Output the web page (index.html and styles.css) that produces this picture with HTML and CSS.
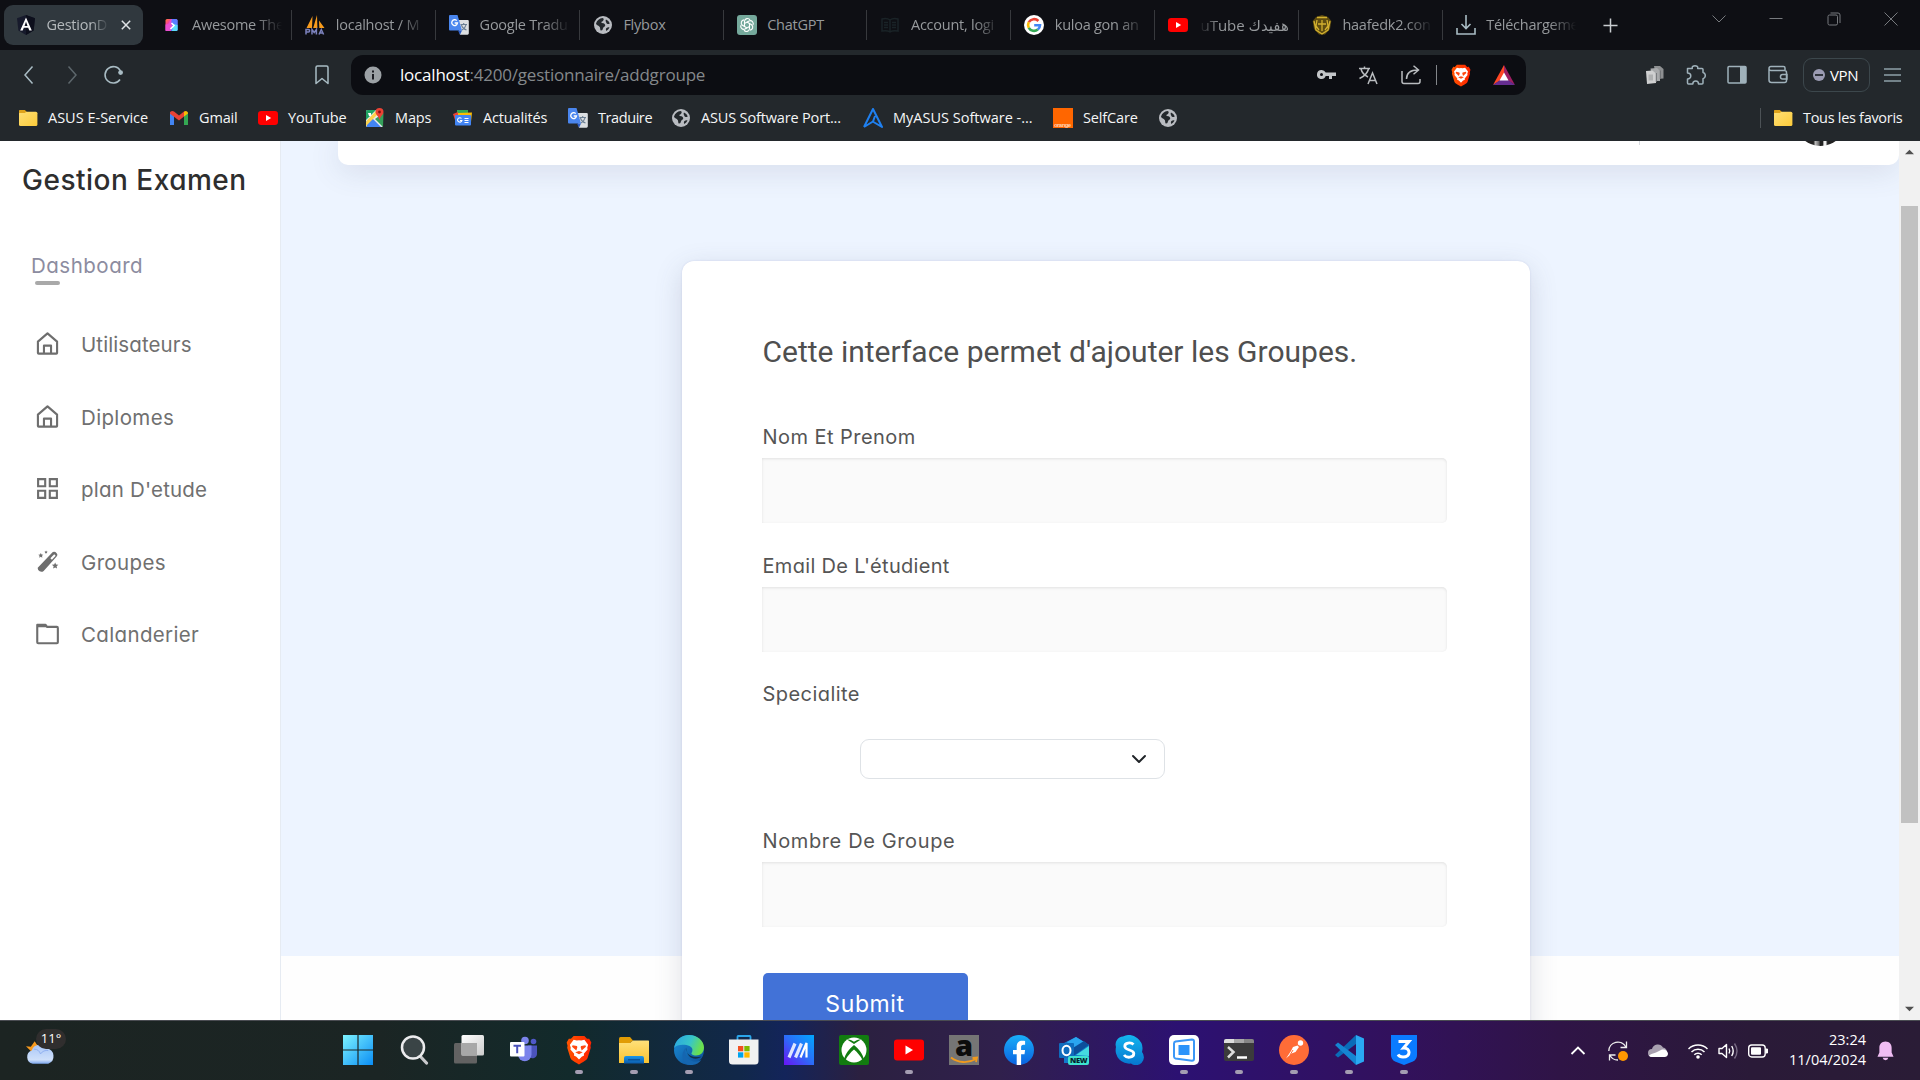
FILE: index.html
```html
<!DOCTYPE html>
<html lang="fr">
<head>
<meta charset="utf-8">
<title>GestionDiplome</title>
<link rel="stylesheet" href="styles.css">
</head>
<body>
<svg class="defs" width="0" height="0" aria-hidden="true">
  <defs>
    <linearGradient id="g-win" x1="0" y1="0" x2="1" y2="1"><stop offset="0" stop-color="#7df3ff"/><stop offset="1" stop-color="#0a8df5"/></linearGradient>
    <linearGradient id="g-fold" x1="0" y1="0" x2="0" y2="1"><stop offset="0" stop-color="#ffe07a"/><stop offset="1" stop-color="#f9c331"/></linearGradient>
    <linearGradient id="g-folds" x1="0" y1="0" x2="1" y2="1"><stop offset="0" stop-color="#ffdf75"/><stop offset="1" stop-color="#fccb3a"/></linearGradient>
    <linearGradient id="g-fblue" x1="0" y1="0" x2="0" y2="1"><stop offset="0" stop-color="#1a97ea"/><stop offset="1" stop-color="#0b5bab"/></linearGradient>
    <linearGradient id="g-tv" x1="0" y1="0" x2="1" y2="1"><stop offset="0" stop-color="#fff"/><stop offset="1" stop-color="#ccc"/></linearGradient>
    <linearGradient id="g-edge1" x1="0" y1="0" x2="1" y2=".3"><stop offset="0" stop-color="#2aa3e3"/><stop offset=".6" stop-color="#38c6c8"/><stop offset="1" stop-color="#6be04d"/></linearGradient>
    <linearGradient id="g-edge2" x1="0" y1="0" x2="1" y2="1"><stop offset="0" stop-color="#1b8fd8"/><stop offset="1" stop-color="#0c4c96"/></linearGradient>
    <linearGradient id="g-as" x1="0" y1="1" x2="1" y2="0"><stop offset="0" stop-color="#6a12f5"/><stop offset=".5" stop-color="#2c6cf8"/><stop offset="1" stop-color="#00a8ff"/></linearGradient>
    <linearGradient id="g-fb" x1="0" y1="0" x2="0" y2="1"><stop offset="0" stop-color="#19aef8"/><stop offset="1" stop-color="#0a62e0"/></linearGradient>
    <linearGradient id="g-sk" x1="0" y1="0" x2="0" y2="1"><stop offset="0" stop-color="#14b5ee"/><stop offset="1" stop-color="#0676cf"/></linearGradient>
    <linearGradient id="g-br" x1="0" y1="0" x2="1" y2="0"><stop offset="0" stop-color="#ff5500"/><stop offset="1" stop-color="#ff2200"/></linearGradient>
    <linearGradient id="g-cl" x1="0" y1="0" x2="0" y2="1"><stop offset="0" stop-color="#a9c6f7"/><stop offset=".8" stop-color="#cfe0fa"/><stop offset="1" stop-color="#7ea8ee"/></linearGradient>
    <linearGradient id="g-aw" x1="0" y1="0" x2="1" y2="1"><stop offset="0" stop-color="#ff7a2e"/><stop offset=".35" stop-color="#f434b8"/><stop offset=".6" stop-color="#7c6cff"/><stop offset="1" stop-color="#27d8f5"/></linearGradient>
    <symbol id="i-folder" viewBox="0 0 20 20"><path d="M1 3.500C1 2.500 1.600 2 2.500 2h4.300l2 2H18v3H1z" fill="#d8980c"/><rect x="1" y="3.800" width="18.400" height="14.200" rx="1.500" fill="url(#g-folds)"/><path d="M1 5V3.400C1 2.500 1.600 2 2.500 2h4l1.700 1.800L7 5z" fill="#dfa31b"/></symbol>
    <symbol id="i-yt" viewBox="0 0 20 20"><rect y="3" width="20" height="14" rx="3.200" fill="#f00"/><path d="M8 7v6l5.200-3z" fill="#fff"/></symbol>
    <symbol id="i-globe" viewBox="0 0 20 20"><circle cx="10" cy="10" r="9" fill="#b9bcc1"/><path d="M3 8.500c1-3 3.500-5 6.500-5.400 1.600.4 1.500 1.600.6 2.600-.4.700-1.700.600-1.700 1.600 0 1.300 2.800.6 3.600 2.100.5 1 .1 2.100-1.100 2.600-.9.500-.9 1.800-1.500 2.900-.6.900-2.100.5-2.200-.7 0-1.400-.3-2.200-1.400-3.100C4.700 10.200 3 9.900 3 8.500zM13 4.600c1.700.7 3 2 3.700 3.800-1.200 1.200-2.800.8-3.300-.4-.5-1.200-1.200-2.400-.4-3.400zM13.500 13c1-.8 2-.9 3-.6-.7 1.600-1.800 2.700-3.200 3.500-.6-1-.5-2.200.2-2.900z" fill="#23282c"/></symbol>
    <symbol id="i-gtr" viewBox="0 0 20 20"><path d="M8 5h10.500c.8 0 1.300.5 1.300 1.300v12c0 .8-.5 1.400-1.300 1.400H11z" fill="#dcdfe2"/><path d="M11.500 9.500h6.500M14.700 8v1.500M12.500 10c.5 2 2.500 4 5 5M17 9.800c-.5 2-2 4-4 5.200" stroke="#6b7f93" stroke-width="1.100" fill="none"/><path d="M1.300 0h7.200l4.500 15.500H1.300C.5 15.500 0 15 0 14.200V1.300C0 .5.500 0 1.300 0z" fill="#4a86ee"/><path d="M11 19.700l2-4.200H9z" fill="#2b5cc5"/><path d="M7.700 5.600A2.900 2.900 0 1 0 8.500 8H5.700" stroke="#fff" stroke-width="1.300" fill="none"/></symbol>
    <symbol id="i-brave" viewBox="0 0 24 28"><path d="M7 1h10l2.500 2.600 2-.2L23.500 7l-.8 3 .3 2-3 9.500c-.5 1.500-1.500 2.200-8 6-6.500-3.800-7.500-4.500-8-6L1 12l.3-2-.8-3 2-3.600 2 .2z" fill="url(#g-br)"/><path d="M7 4.500l3 .7 2-.4 2 .4 3-.7 3.500 4.500-.8 3 .3 1.500-3.500 4 .2 1.700-2.200 1L12 22.800l-2.500-2.600-2.200-1 .2-1.700L4 13.500l.3-1.500-.8-3z" fill="#fff"/><path d="M6 9.500l4 .8.500 1-1 3.200-4-3.500zM18 9.500l-4 .8-.5 1 1 3.200 4-3.500zM8.500 16l3.500-1 3.500 1-3.500 2z" fill="#ff4810"/></symbol>
    <symbol id="i-house" viewBox="0 0 24 24"><path d="M2 21.800V10L12 1.400 22 10v11.800c0 .5-.3.800-.8.800H2.800c-.5 0-.8-.3-.8-.8zM8.300 22.400v-8.200h7.400v8.200" fill="none" stroke="#6e6e6e" stroke-width="2.200" stroke-linejoin="round"/></symbol>
  </defs>
</svg>

<div class="browser">
  <header class="tabstrip">
    <div class="tab active">
      <svg class="fav" viewBox="0 0 20 20"><path d="M10 0l9 3.300-1.400 12.200L10 20l-7.600-4.500L1 3.300z" fill="#171a2c"/><path d="M10 0l9 3.300-1.400 12.200L10 20z" fill="#0d0f1c"/><path d="M10 2.500L4.200 15.500h2.500l1.100-2.800h4.400l1.100 2.800h2.500zM10 6.800l1.500 4.100h-3z" fill="#fff" fill-rule="evenodd"/></svg>
      <span class="tab-title">GestionD</span>
      <svg class="tab-x" viewBox="0 0 10 10"><path d="M.8.8l8.400 8.400M9.200.8L.8 9.200" stroke="#dfe3e6" stroke-width="1.500"/></svg>
    </div>
    <div class="tab first"><svg class="fav" viewBox="0 0 20 20"><rect x="3.500" y="4" width="12" height="12" rx="1.500" fill="url(#g-aw)"/><path d="M3.500 16V9.500c3 0 4-1.500 4-3L9 4h2c-2 3 2 5-1 8-1 1-1 3-1 4z" fill="#e94fd0"/><path d="M10 4c-2 4 2 6-1 12h5q1.500 0 1.500-1.500V5.500Q15.500 4 14 4z" fill="#5b7cff"/><path d="M11.500 9l4 1v4.500q0 1.500-1.500 1.500h-4z" fill="#5cdcf8"/><path d="M9.500 8l2.500 2.500-3.500 3.500" stroke="#fff" stroke-width="1.600" fill="none"/></svg><span class="tab-title">Awesome The</span></div>
    <div class="tab"><svg class="fav" viewBox="0 0 20 20"><path d="M7.500 1L7 13H1.500zM12 0l.4 13H8.200zM14 5.500L19.500 13H14.300z" fill="#f89c1c"/><path d="M1 19.500v-5h2.500c1.500 0 1.500 2.500 0 2.500H1M7 19.500v-5l2.200 3 2.200-3v5M14 19.500l2.300-5 2.300 5M15 18h3" stroke="#7c82bd" stroke-width="1.500" fill="none"/></svg><span class="tab-title">localhost / M</span></div>
    <div class="tab"><svg class="fav"><use href="#i-gtr"/></svg><span class="tab-title">Google Tradu</span></div>
    <div class="tab"><svg class="fav"><use href="#i-globe"/></svg><span class="tab-title full">Flybox</span></div>
    <div class="tab"><svg class="fav" viewBox="0 0 20 20"><rect width="20" height="20" rx="3" fill="#75a99c"/><g fill="none" stroke="#fff" stroke-width="1.100"><path d="M7.500 11.500V6.200a3 3 0 0 1 5.500-1.300"/><path d="M7.500 11.500V6.200a3 3 0 0 1 5.500-1.300" transform="rotate(60 10 10)"/><path d="M7.500 11.500V6.200a3 3 0 0 1 5.500-1.300" transform="rotate(120 10 10)"/><path d="M7.500 11.500V6.200a3 3 0 0 1 5.500-1.300" transform="rotate(180 10 10)"/><path d="M7.500 11.500V6.200a3 3 0 0 1 5.500-1.300" transform="rotate(240 10 10)"/><path d="M7.500 11.500V6.200a3 3 0 0 1 5.500-1.300" transform="rotate(300 10 10)"/></g></svg><span class="tab-title full">ChatGPT</span></div>
    <div class="tab"><svg class="fav" viewBox="0 0 20 20"><path d="M2 4c3-.8 6-.5 8 1 2-1.500 5-1.800 8-1v12c-3-.6-6-.4-8 1-2-1.400-5-1.600-8-1zM10 5v12M4 7.500h4M4 10h4M4 12.500h4M12 7.500h4M12 10h4M12 12.500h4" stroke="#1a2327" stroke-width="1.500" fill="none"/></svg><span class="tab-title">Account, logi</span></div>
    <div class="tab"><svg class="fav" viewBox="0 0 20 20"><circle cx="10" cy="10" r="10" fill="#fff"/><g fill="none" stroke-width="2.600"><path d="M14.400 6A6 6 0 0 0 4.800 7.200" stroke="#ea4335"/><path d="M4.800 7.200a6 6 0 0 0 0 5.600" stroke="#fbbc05"/><path d="M4.800 12.800a6 6 0 0 0 9 1.800" stroke="#34a853"/><path d="M13.800 14.600A6 6 0 0 0 16 10.200h-5.800" stroke="#4285f4"/></g></svg><span class="tab-title">kuloa gon an</span></div>
    <div class="tab"><svg class="fav"><use href="#i-yt"/></svg><span class="tab-title rtl">هفيدك uTube</span></div>
    <div class="tab"><svg class="fav" viewBox="0 0 20 20"><path d="M4 2l6-2 6 2 3.300 4-1.300 8-5 5.500h-6L2 14 .7 6z" fill="#5e4c10"/><path d="M5 2.500h10M2 6l2 9 6 4 6-4 2-9M10 5v11M6 9h8M5 5l-1 6 3 4M15 5l1 6-3 4" stroke="#d2b02f" stroke-width="1.300" fill="none"/></svg><span class="tab-title">haafedk2.con</span></div>
    <div class="tab"><svg class="fav" viewBox="0 0 20 20"><path d="M10 0v13M5.500 9l4.500 4.500L14.500 9M1 13v6h18v-6" stroke="#a9bcc4" stroke-width="1.600" fill="none"/></svg><span class="tab-title">Téléchargeme</span></div>
    <svg class="newtab" viewBox="0 0 16 16"><path d="M8 .5v15M.5 8h15" stroke="#c9cdd0" stroke-width="1.600"/></svg>
    <div class="winctl">
      <svg viewBox="0 0 14 14"><path d="M.5 3.500L7 10l6.500-6.500" /></svg>
      <svg viewBox="0 0 14 14"><path d="M.5 6.500h13"/></svg>
      <svg viewBox="0 0 14 14"><rect x="1" y="3" width="9.500" height="10" rx="1.500"/><path d="M3.500 1h7.500q2 0 2 2v8"/></svg>
      <svg viewBox="0 0 14 14"><path d="M.5.5l13 13M13.500.5l-13 13"/></svg>
    </div>
  </header>

  <div class="toolbar">
    <div class="nav">
      <svg viewBox="0 0 20 20"><path d="M13.500 1.500L6 10l7.500 8.500" stroke="#a9bcc4" stroke-width="1.500" fill="none"/></svg>
      <svg viewBox="0 0 20 20"><path d="M6.500 1.500L14 10l-7.500 8.500" stroke="#5d676c" stroke-width="1.500" fill="none"/></svg>
      <svg viewBox="0 0 20 20"><path d="M16 14.500A8.200 8.200 0 1 1 16.500 6" stroke="#a9bcc4" stroke-width="1.600" fill="none"/><circle cx="16.600" cy="7.600" r="2.400" fill="#a9bcc4"/></svg>
    </div>
    <svg class="bm" viewBox="0 0 20 20"><path d="M4 2.500C4 1.500 4.500 1 5.500 1h9c1 0 1.500.5 1.500 1.500v16L10 13.500l-6 5z" stroke="#a9bcc4" stroke-width="1.500" fill="none" stroke-linejoin="round"/></svg>
    <div class="urlbar">
      <svg class="info" viewBox="0 0 18 18"><circle cx="9" cy="9" r="8.500" fill="#9ca1a5"/><path d="M9 8v5.500M9 4.500v2" stroke="#0e0f14" stroke-width="1.800"/></svg>
      <span class="url"><b>localhost</b>:4200/gestionnaire/addgroupe</span>
      <div class="urlicons">
        <svg viewBox="0 0 20 20"><path d="M5.500 5a4.500 4.500 0 1 0 4.200 6H13v3h3v-3h4V7.500H9.700A4.500 4.500 0 0 0 5.500 5zm0 3a1.500 1.500 0 1 1 0 3 1.500 1.500 0 0 1 0-3z" fill="#c3c5c8" fill-rule="evenodd"/></svg>
        <svg viewBox="0 0 20 20"><path d="M1 3.500h11M6.500 1.500v2M3 4c1 4 4 6.500 7 8M10.500 4c-1 4-4.500 7.500-9 9.500M10 19l4.500-11L19 19M11.500 15.500h6" stroke="#b9bcbf" stroke-width="1.500" fill="none"/></svg>
        <svg viewBox="0 0 20 20"><path d="M1 6v10.500q0 2 2 2h14q2 0 2-2V14M5.500 14c0-6 4-9 11.500-9M12.500.8L17.500 5l-5 4.200" stroke="#b9bcbf" stroke-width="1.500" fill="none"/></svg>
        <i class="sep"></i>
        <svg class="brv"><use href="#i-brave"/></svg>
        <svg class="tri" viewBox="0 0 22 20"><path d="M11 0L0 20l11-7z" fill="#ff4724"/><path d="M11 0l11 20-11-7z" fill="#9e1f63"/><path d="M0 20h22l-7-5H7z" fill="#662d91"/><path d="M11 7.500L6.500 15.500h9z" fill="#fff"/></svg>
      </div>
    </div>
    <div class="ext">
      <svg viewBox="0 0 20 20"><path d="M9 1h6l3.500 3v9.500l-7 .5z" fill="#8e9092"/><path d="M5.500 3.500L12 3l3 3v10H7z" fill="#a7a9ab"/><path d="M1 6l6.500-.5 3.500 3V18l-9 1z" fill="#cfd0d1"/><path d="M3.500 9.500h4.500v6h-4.500z" fill="#aeb0b1"/><path d="M11.300 8v9M15.300 5.500V14" stroke="#6d7073"/></svg>
      <svg viewBox="0 0 20 20"><path d="M1.500 3.500H6.300C5.800 1.500 7.300.8 9 .8s3.200.7 2.700 2.700H16c.6 0 1 .4 1 1v3c1.400.2 2.300 1.600 2.300 3s-1 2.900-2.300 3.200v4.200c0 .6-.4 1-1 1h-3.500c0-1.800-1.200-3-2.700-3s-3 1.200-3 3H2.500c-.6 0-1-.4-1-1v-4c1.800 0 3.300-1 3.300-2.900S3.300 8 1.500 8z" stroke="#9fb1ba" stroke-width="1.500" fill="none" stroke-linejoin="round"/></svg>
      <svg viewBox="0 0 20 20"><rect x="1" y="1.500" width="18" height="16.500" rx="1" stroke="#9fb1ba" stroke-width="1.500" fill="none"/><path d="M13 1.500h6V18h-6z" fill="#9fb1ba"/></svg>
      <svg viewBox="0 0 20 20"><path d="M17 5.500V3q0-1.500-1.500-1.500H3Q1 1.500 1 3.500V15q0 2.500 2.500 2.500h13q2 0 2-2v-8q0-2-2-2H3Q1 5.500 1 3.500M19 9.500h-4.500a2 2.200 0 0 0 0 4.500H19z" stroke="#9fb1ba" stroke-width="1.500" fill="none"/></svg>
      <div class="vpn"><i></i><span>VPN</span></div>
      <svg class="menu" viewBox="0 0 18 14"><path d="M0 1h17M0 7h17M0 13h17" stroke="#8fa0a8" stroke-width="1.300"/></svg>
    </div>
  </div>

  <nav class="bookmarks">
    <a><svg><use href="#i-folder"/></svg><span class="t1">ASUS E-Service</span></a>
    <a><svg viewBox="0 0 20 20"><path d="M1 17V4l4 3v10z" fill="#4285f4"/><path d="M15 7l4-3v13h-4z" fill="#34a853"/><path d="M1 5.500C1 3 3.500 2.500 5 3.600l5 3.900 5-3.900V8.500L10 12.400 1 5.800z" fill="#ea4335"/><path d="M15 3.600c1.800-1.300 4-.5 4 1.900L15 8.600z" fill="#fbbc04"/></svg><span>Gmail</span></a>
    <a><svg><use href="#i-yt"/></svg><span>YouTube</span></a>
    <a><svg viewBox="0 0 20 20"><rect x="1" y="2" width="17" height="17" rx="1.500" fill="#e9eaec"/><path d="M1 14l5-5 10 10H2z" fill="#4285f4"/><path d="M1 13.500L12 2l2 3L1 18z" fill="#fdd34c"/><path d="M1 3.500Q1 2 2.500 2H11L1 12z" fill="#1fa463"/><path d="M10 11l8 8 .5-14z" fill="#34a05a"/><path d="M3 5h3v3H4z" fill="#fff"/><path d="M14.500 0a4 4 0 0 1 4 4c0 3-3.500 4-4 8.500C14 8 10.500 7 10.500 4a4 4 0 0 1 4-4z" fill="#ea4335"/><circle cx="14.500" cy="4" r="1.400" fill="#811411"/></svg><span>Maps</span></a>
    <a><svg viewBox="0 0 20 20"><path d="M4 2h11v6H4z" fill="#34a853"/><path d="M0 6l5-2v8H2z" fill="#ea4335"/><path d="M5 5l14-.5L18 14H5z" fill="#fbbc04"/><rect x="2" y="7" width="16" height="10.500" rx="1" fill="#4285f4"/><path d="M8.500 10.500a2.200 2.200 0 1 0 .4 2H7M11.500 10.500h4M11.500 12.500h4M11.500 14.500h4" stroke="#fff" stroke-width="1.100" fill="none"/></svg><span>Actualités</span></a>
    <a><svg><use href="#i-gtr"/></svg><span class="t2">Traduire</span></a>
    <a><svg><use href="#i-globe"/></svg><span class="t3">ASUS Software Port...</span></a>
    <a><svg viewBox="0 0 20 20"><path d="M1 19L10 1l9 18-8.500-5M1 19l9-5.500L12 8" stroke="#1f80f0" stroke-width="2" fill="none" stroke-linejoin="round"/></svg><span class="t1">MyASUS Software -...</span></a>
    <a><svg viewBox="0 0 20 20"><path d="M0 0h20v20H0z" fill="#f60"/><text x="1" y="18.500" font-size="6" font-family="Liberation Sans, sans-serif" font-weight="bold" fill="#ffd2b3" textLength="17">orange</text></svg><span>SelfCare</span></a>
    <a><svg><use href="#i-globe"/></svg></a>
    <a class="all"><svg><use href="#i-folder"/></svg><span>Tous les favoris</span></a>
  </nav>
</div>

<main class="page">
  <aside class="sidebar">
    <h1>Gestion Examen</h1>
    <h2>Dashboard</h2>
    <ul>
      <li><svg><use href="#i-house"/></svg><span class="t4">Utilisateurs</span></li>
      <li><svg><use href="#i-house"/></svg><span>Diplomes</span></li>
      <li><svg viewBox="0 0 24 24"><path d="M2.200 2.200h7.400v7.400H2.200zM14.400 2.200h7.400v7.400h-7.400zM2.200 14.400h7.400v7.400H2.200zM14.400 14.400h7.400v7.400h-7.400z" fill="none" stroke="#6e6e6e" stroke-width="2.200"/></svg><span class="t5">plan D'etude</span></li>
      <li><svg viewBox="0 0 24 24"><path d="M1.800 18.500L16.500 3a3 3 0 0 1 4.800 0 2.800 2.800 0 0 1 0 4L8 21.800a3.800 3.800 0 0 1-6.200-3.300z" fill="#6e6e6e"/><path d="M15 8.600L19 4.500l1.500 1.500-3.900 4.100z" fill="#fff"/><path d="M5 3l.8 1.700 1.800.2-1.300 1.200.3 1.900L5 7.100 3.400 8l.3-1.900L2.400 4.900l1.800-.2zM10.500.5l.5 1 1.200.2-.9.8.2 1.200-1-.6-1.100.6.200-1.200-.8-.8 1.100-.2zM20 13l.9 2.200 2.400.2-1.800 1.600.5 2.400-2-1.200-2.200 1.200.6-2.400-1.900-1.600 2.500-.2z" fill="#6e6e6e"/></svg><span>Groupes</span></li>
      <li><svg viewBox="0 0 24 24"><path d="M1.300 3v18c0 .8.300 1.100 1 1.100h19.500c.7 0 1-.3 1-1.100V6.200c0-.8-.3-1.100-1-1.100H11.500L10 3z" fill="none" stroke="#6e6e6e" stroke-width="2.200" stroke-linejoin="round"/><path d="M1.500 2H10l2 3.500H1.500z" fill="#6e6e6e"/></svg><span>Calanderier</span></li>
    </ul>
  </aside>
  <section class="content">
    <div class="topcard"><i class="divider"></i><i class="avatar"></i></div>
    <form class="card">
      <h3>Cette interface permet d'ajouter les Groupes.</h3>
      <label>Nom Et Prenom</label>
      <div class="field"></div>
      <label class="tight">Email De L'étudient</label>
      <div class="field short"></div>
      <label>Specialite</label>
      <div class="select"><svg viewBox="0 0 16 16"><path d="M2 5l6 6 6-6" fill="none" stroke="#212529" stroke-width="2" stroke-linecap="round" stroke-linejoin="round"/></svg></div>
      <label class="wide">Nombre De Groupe</label>
      <div class="field"></div>
      <div class="submit">Submit</div>
    </form>
  </section>
  <div class="scrollbar"><svg viewBox="0 0 10 6"><path d="M0 5.500h10L5 .5z" fill="#505050"/></svg><i></i><svg viewBox="0 0 10 6"><path d="M0 .5h10L5 5.500z" fill="#505050"/></svg></div>
</main>

<footer class="taskbar">
  <div class="weather">
    <svg viewBox="0 0 32 26"><path d="M10 2l2 3 4 3-8 6-2-2-5-5 5 .5z" fill="#f79a1e"/><path d="M8 25a7 7 0 0 1-1-13.500A8.500 8.500 0 0 1 22.500 9.500 8 8 0 0 1 24 25z" fill="url(#g-cl)"/><path d="M9 10c4 0 6 2 7 5 2-3 5-4 8-3.500" stroke="#8fb0ef" fill="none"/></svg>
    <span>11°</span>
  </div>
  <div class="apps">
    <div><svg viewBox="0 0 30 30"><path d="M0 0h14.400v14.400H0zM15.600 0H30v14.400H15.600zM0 15.600h14.400V30H0zM15.600 15.600H30V30H15.600z" fill="url(#g-win)"/></svg></div>
    <div><svg viewBox="0 0 30 30"><path d="M20.500 20.500L27.500 28" stroke="#c9c9cc" stroke-width="3.200" stroke-linecap="round"/><circle cx="14" cy="12.500" r="11" fill="#3a4446" stroke="#ececee" stroke-width="2.500"/></svg></div>
    <div><svg viewBox="0 0 30 30"><rect x="0" y="8" width="23" height="20.500" rx="1.500" fill="#626262"/><rect x="7.500" y="0" width="22.500" height="20.500" rx="1.500" fill="url(#g-tv)"/><path d="M7.500 8H23v12.500H7.500z" fill="#a8a8a8"/></svg></div>
    <div><svg viewBox="0 0 30 30"><circle cx="24.500" cy="6.500" r="2.800" fill="#5059c9"/><path d="M19 10.500h9v8a4.500 4.500 0 0 1-8 3z" fill="#4b53bc"/><circle cx="16" cy="5.500" r="3.800" fill="#7b83eb"/><path d="M9 10.500h13.500v9a6.700 6.700 0 0 1-13.500 0z" fill="#7b83eb"/><rect x="1" y="7" width="14.500" height="14.500" rx="1" fill="#fff"/><path d="M4.500 10.800h7.500M8.200 10.800v7.500" stroke="#4b53bc" stroke-width="2"/></svg></div>
    <div class="on"><svg><use href="#i-brave"/></svg></div>
    <div class="on"><svg viewBox="0 0 30 30"><path d="M0 3.500Q0 2 1.500 2h9.500l3 3.500L11 8H0z" fill="#e19c05"/><path d="M0 8h11l3-2.500h15q1.300 0 1.300 1.300V28H0z" fill="url(#g-fold)"/><path d="M5 28.500V23q0-2 2-2h16q2 0 2 2v5.500z" fill="url(#g-fblue)"/><path d="M9 24.800h12" stroke="#0a4f94" stroke-width="1.300"/></svg></div>
    <div class="on"><svg viewBox="0 0 30 30"><circle cx="15" cy="15" r="15" fill="url(#g-edge2)"/><path d="M0 13C1.500 5 7.500 0 15 0c8.500 0 15 6 15 12.500 0 5-3.500 8-8 8-3 0-5-1.200-4.500-2.500 1.500-2 1.500-5.500-2-7C11 9 3 9 0 13z" fill="url(#g-edge1)"/><path d="M13 12.500c-3 3-2 9.500 3 12.500 4 2.300 8 2 11.500-.5-3 5-9 6.500-14.500 5C6 26 8 14 13 12.500z" fill="#1566b0"/><path d="M13 13c-1.500 4 1.500 11 14.500 8.500-5 4.500-16 2-14.500-8.500z" fill="#14304a"/></svg></div>
    <div><svg viewBox="0 0 30 30"><path d="M8.500 6V1.700q0-.7.700-.7h11.600q.7 0 .7.700V6" stroke="#2aa5ea" stroke-width="1.800" fill="none"/><path d="M0 4.500h29.500V26q0 3.500-3.500 3.500H3.500Q0 29.500 0 26z" fill="#f1f1f1"/><path d="M9 11h5.300v5.300H9z" fill="#f25022"/><path d="M15.300 11h5.300v5.300h-5.300z" fill="#7fba00"/><path d="M9 17.300h5.300v5.300H9z" fill="#00a4ef"/><path d="M15.300 17.300h5.300v5.300h-5.300z" fill="#ffb900"/></svg></div>
    <div><svg viewBox="0 0 30 30"><path d="M0 0h30v30H0z" fill="url(#g-as)"/><path d="M5 22.500L11 8.500M11.500 22.500L17.500 8.500" stroke="#dfe6ff" stroke-width="3.200"/><path d="M16.500 22.500L22.500 8v14.500" stroke="#fff" stroke-width="2.200" fill="none"/></svg></div>
    <div><svg viewBox="0 0 30 30"><rect width="30" height="30" rx="2" fill="#127c10"/><circle cx="15" cy="15" r="12.500" fill="#fff"/><path d="M8 4.500c3-.5 5 1 7 2.300C17 5.500 19 4 22 4.500L15 9z" fill="#127c10"/><path d="M5 25c1-6 5.500-11.500 10-15 4.500 3.500 9 9 10 15l-1.500 0c-2-4-5-7.500-8.500-10.500-3.500 3-6.500 6.500-8.500 10.500z" fill="#127c10"/></svg></div>
    <div class="on"><svg viewBox="0 0 30 30"><rect y="4.500" width="30" height="21" rx="3" fill="#f00"/><path d="M11.500 10.500v9L19 15z" fill="#fff"/></svg></div>
    <div><svg viewBox="0 0 30 30"><path d="M0 0h30v30H0z" fill="#757575"/><text x="6" y="20.500" font-family="Open Sans, sans-serif" font-weight="800" font-size="29" fill="#0c0c0c">a</text><path d="M2 22.500c7 5.500 17 6 25 1.500M23.500 23l4.500-.5-1 4.500" stroke="#f19a1d" stroke-width="1.800" fill="none"/></svg></div>
    <div><svg viewBox="0 0 30 30"><circle cx="15" cy="15" r="15" fill="url(#g-fb)"/><path d="M12.700 30V19.300H9v-4.400h3.700v-3.300c0-3.800 2.200-5.800 5.600-5.800 1.500 0 2.800.2 2.800.2v3.800h-1.700c-1.800 0-2.300 1.100-2.300 2.200v2.900h4l-.6 4.400h-3.400V30z" fill="#fff"/></svg></div>
    <div><svg viewBox="0 0 30 30"><path d="M5 8L17 2l13 8v18H5z" fill="#1279cb"/><path d="M17 2l13 8-14 9-8-12z" fill="#2aa6f0"/><path d="M30 11v10L17 20z" fill="#45dbe0"/><path d="M9 16L25 6l5 4-17 12z" fill="#0c4f9b"/><rect y="8" width="15" height="15" rx="1" fill="#0f6cbd"/><ellipse cx="7.500" cy="15.500" rx="4" ry="4.700" fill="none" stroke="#fff" stroke-width="2"/><rect x="9" y="21" width="21" height="9" rx="2" fill="#3ee2cf"/><text x="11" y="28.300" font-family="Open Sans, sans-serif" font-weight="800" font-size="7.500" textLength="17.500" fill="#06222e">NEW</text></svg></div>
    <div><svg viewBox="0 0 30 30"><path d="M9 1.500A13.500 13.500 0 0 1 28 17 8 8 0 0 1 17 28.500 13.500 13.500 0 0 1 2 12 8 8 0 0 1 9 1.500z" fill="url(#g-sk)"/><path d="M19.500 9.500C17 7 10.500 7.500 10.800 11.500c.3 4.500 9 2.500 9 7 0 4.500-7.300 4.800-9.800 1.500" stroke="#fff" stroke-width="2.800" fill="none"/></svg></div>
    <div class="on"><svg viewBox="0 0 30 30"><rect width="30" height="30" rx="5" fill="#fff"/><path d="M6.500 6.500Q5 7 5 8.500v13q0 1.500 1.500 2l16.500 2.200q2 0 2-2V6.500q0-2-2-2z" fill="none" stroke="#3b97f7" stroke-width="2"/><rect x="9.500" y="10" width="11" height="10" fill="#2c93fa"/></svg></div>
    <div class="on"><svg viewBox="0 0 30 30"><path d="M0 6q0-2 2-2h26q2 0 2 2v18q0 2-2 2H2q-2 0-2-2z" fill="#3b3b3b"/><path d="M0 8V6q0-2 2-2h8v4z" fill="#ddd"/><path d="M10 4h10v4H10z" fill="#a8a8a8"/><path d="M20 4h8q2 0 2 2v2H20z" fill="#858585"/><path d="M4 12l5.500 5L4 22.500" stroke="#ddd" stroke-width="2.500" fill="none"/><path d="M13 22.500h10" stroke="#fff" stroke-width="2.500"/></svg></div>
    <div class="on"><svg viewBox="0 0 30 30"><circle cx="15" cy="15" r="15" fill="#ff6c37"/><path d="M7 23.500l5-7.500 2-4 4.500-1.500 1.500 1.500-3.500 5-4 1.500z" fill="#fff"/><circle cx="21.500" cy="8" r="2.700" fill="#fff"/><path d="M14 15l-3 5" stroke="#ff6c37" stroke-width="1"/></svg></div>
    <div class="on"><svg viewBox="0 0 30 30"><path d="M22 0l8 3.500v23L22 30z" fill="#2aa8f2"/><path d="M22 0v9L4 22.500 1 20z" fill="#0a6cb8"/><path d="M22 30v-9L4 7.500 1 10z" fill="#1585d2"/></svg></div>
    <div class="on"><svg viewBox="0 0 30 30"><path d="M2 0h26v20q0 4-4 6.500L15 30l-9-3.500Q2 24 2 20z" fill="#0a7bff"/><path d="M9.500 6.500h10.500l-5.500 6.500c7-.5 8 9-.5 9-2.500 0-4-.8-5-2.500" stroke="#fff" stroke-width="3" fill="none"/></svg></div>
  </div>
  <div class="tray">
    <svg viewBox="0 0 20 20"><path d="M3.500 13L10 6.500l6.500 6.500" stroke="#fff" stroke-width="1.800" fill="none"/></svg>
    <svg viewBox="0 0 20 20"><path d="M.8 10a9 9 0 0 1 17-4M18.500.5v6h-6M1.500 19.500v-5.500h6M2 14.500a9 9 0 0 0 8 4.500" stroke="#eee" stroke-width="1.300" fill="none"/><circle cx="15" cy="15" r="5" fill="#ff9800"/></svg>
    <svg viewBox="0 0 20 20"><path d="M4 16a4 4 0 0 1 0-8 6 6 0 0 1 11-1.500A5 5 0 0 1 16 16z" fill="#a9a1b0"/><path d="M1 14.500c2-2 4-1.500 7-3l5-2.500c3-1.500 7 .5 7 4A3.600 3.600 0 0 1 16.500 16H4a3.500 3.500 0 0 1-3-1.500z" fill="#fff"/></svg>
    <svg viewBox="0 0 20 20"><g stroke="#fff" stroke-width="1.500" fill="none"><path d="M.5 8a13.400 13.400 0 0 1 19 0M3.500 11a9.200 9.200 0 0 1 13 0M6.300 13.800a5.200 5.200 0 0 1 7.400 0"/></g><circle cx="10" cy="16" r="1.800" fill="#fff"/></svg>
    <svg viewBox="0 0 20 20"><path d="M1 7.500h3L8.500 3.500v13L4 12.500H1z" stroke="#fff" stroke-width="1.400" fill="none" stroke-linejoin="round"/><path d="M11 7.500q1.500 2.500 0 5M13.700 5q3 5 0 10" stroke="#fff" stroke-width="1.400" fill="none"/><path d="M16.500 2.500q5 7.500 0 15" stroke="#776a83" stroke-width="1.400" fill="none"/></svg>
    <svg viewBox="0 0 20 20"><rect x=".7" y="4" width="16.500" height="12" rx="3" stroke="#fff" stroke-width="1.400" fill="none"/><rect x="3" y="6.300" width="10" height="7.400" rx="1" fill="#fff"/><path d="M18 8h1.500v4H18z" fill="#fff" stroke="#fff"/></svg>
    <div class="clock"><span>23:24</span><span>11/04/2024</span></div>
    <svg class="bell" viewBox="0 0 18 20"><path d="M9 0c4 0 6.500 3 6.500 6.500v5L17.500 16H.5l2-4.500v-5C2.500 3 5 0 9 0zM6 17.200h6q-.5 2.500-3 2.500t-3-2.500z" fill="#f0bdf3"/></svg>
  </div>
</footer>
</body>
</html>
```
FILE: styles.css
```css
* { box-sizing: border-box; }
html, body { margin: 0; height: 100%; overflow: hidden; }
body { width: 1920px; height: 1080px; display: flex; flex-direction: column; background: #fff; font-family: "Open Sans", "Noto Sans", "DejaVu Sans", sans-serif; }
svg { display: block; flex: none; }
.defs { position: absolute; }

/* browser chrome */
.browser { flex: none; height: 141px; background: #23282c; }
.tabstrip { display: flex; height: 50px; background: #0e0f14; padding-left: 4px; }
.tab { display: flex; align-items: center; width: 143.8px; height: 50px; padding: 0 6px 0 14px; position: relative; flex: none; }
.tab::before { content: ""; position: absolute; left: 0; top: 10px; width: 1px; height: 30px; background: #37393d; }
.tab.active::before, .tab.first::before { display: none; }
.tab.active { width: 139px; height: 40px; margin: 5px 4.500px 0 0; padding: 0 12px; border-radius: 9px; background: #30383e; }
.fav { width: 20px; height: 20px; margin-right: 10.500px; }
.tab-title { flex: 1; white-space: nowrap; font-size: 14.500px; letter-spacing: -.25px; line-height: 24px; margin-top: -1px; color: #96999c; -webkit-mask-image: linear-gradient(90deg, #000 68%, transparent 97%); mask-image: linear-gradient(90deg, #000 68%, transparent 97%); }
.tab-title.full { -webkit-mask-image: none; mask-image: none; }
.tab-title.rtl { direction: rtl; padding-right: 3px; font-size: 15px; letter-spacing: 0; -webkit-mask-image: linear-gradient(270deg, #000 78%, transparent); mask-image: linear-gradient(270deg, #000 78%, transparent); }
.tab.active .tab-title { flex: 0 0 64px; color: #b4b9bc; }
.tab-x { width: 10px; height: 10px; margin-left: 10.500px; }
.newtab { width: 15px; height: 15px; margin: 17.500px 0 0 18px; }
.winctl { display: flex; margin: 12px 22px 0 auto; gap: 43.400px; }
.winctl svg { width: 14px; height: 14px; fill: none; stroke: #777a7e; stroke-width: 1; }

.toolbar { display: flex; align-items: center; height: 50px; }
.nav { display: flex; gap: 22.500px; margin-left: 19px; width: 293px; }
.nav svg, .bm { width: 20px; height: 20px; }
.urlbar { display: flex; align-items: center; width: 1175px; height: 40px; margin-left: 19px; padding-left: 13px; background: #0c0d12; border-radius: 12px; }
.info { width: 18px; height: 18px; margin-right: 18px; }
.url { font-size: 17px; line-height: 24px; letter-spacing: -.2px; color: #84888b; white-space: nowrap; margin-top: -1px; }
.url b { font-weight: 400; color: #fff; }
.urlicons { display: flex; align-items: center; margin-left: auto; padding-right: 11px; gap: 22.500px; }
.urlicons svg { width: 20px; height: 20px; }
.urlicons .sep { width: 1px; height: 20px; margin: 0 -8px 0 -7.500px; background: #83868a; }
.urlicons .brv { width: 20px; height: 23px; }
.urlicons .tri { width: 22px; height: 20px; margin-left: -.5px; }
.ext { display: flex; align-items: center; margin-left: 119px; gap: 21px; }
.ext svg { width: 20px; height: 20px; }
.vpn { display: flex; align-items: center; gap: 5px; width: 67px; height: 34px; margin-left: -6px; padding-left: 9px; border: 1px solid #3c474c; border-radius: 9px; color: #fff; font-size: 15px; letter-spacing: -.4px; }
.vpn i { width: 12px; height: 12px; border-radius: 50%; background: linear-gradient(#30343c, #30343c) center / 8px 2px no-repeat #9b9bb2; }
.ext .menu { width: 18px; height: 14px; margin-left: -7px; }

.bookmarks { display: grid; grid-template-columns: 151px 89px 107px 88px 115px 103px 192px 190px 105px 610px auto; height: 35px; padding-left: 18px; }
.bookmarks a { display: flex; align-items: center; gap: 10px; color: #f5f6f7; font-size: 14.500px; letter-spacing: -.15px; white-space: nowrap; }
.bookmarks svg { width: 20px; height: 20px; }
.bookmarks span { margin-top: -1px; }
.bookmarks .t1 { letter-spacing: 0; }
.bookmarks .t2 { letter-spacing: -.42px; }
.bookmarks .t3 { letter-spacing: -.16px; }
.bookmarks .all { position: relative; margin-left: 5px; letter-spacing: -.3px; }
.bookmarks .all::before { content: ""; position: absolute; left: -13px; top: 8px; width: 1px; height: 20px; background: #4c5256; }

/* page */
.page { flex: none; display: flex; height: 879px; overflow: hidden; font-family: Inter, "Open Sans", sans-serif; font-feature-settings: "cv11"; }
.sidebar { width: 281px; flex: none; border-right: 1px solid #e6ebf2; background: #fff; color: #707070; }
.sidebar h1 { margin: 0; padding: 21px 0 0 22px; font-size: 28px; line-height: 36px; font-weight: 450; letter-spacing: .5px; color: #2e2e2e; white-space: nowrap; }
.sidebar h2 { position: relative; margin: 53px 0 0 31px; font-size: 20.500px; line-height: 30px; font-weight: 400; letter-spacing: .5px; color: #8c8ca0; }
.sidebar h2::after { content: ""; position: absolute; left: 4px; top: 30px; width: 25px; height: 4px; border-radius: 2px; background: #a9a9a9; }
.sidebar ul { list-style: none; margin: 27.500px 0 0; padding: 0 0 0 36px; }
.sidebar li { display: flex; align-items: center; gap: 22px; height: 72.500px; font-size: 20.500px; letter-spacing: .35px; white-space: nowrap; }
.sidebar li svg { width: 23px; height: 23px; margin-top: -2px; }
.sidebar li .t4 { letter-spacing: .1px; }
.sidebar li .t5 { letter-spacing: .2px; }

.content { flex: 1; display: flex; flex-direction: column; align-items: center; background: linear-gradient(#edf4ff 815px, #fefefe 815px); overflow: hidden; }
.topcard { position: relative; flex: none; align-self: stretch; margin-left: 57px; height: 24px; border-radius: 0 0 10px 10px; background: #fff; box-shadow: 0 5px 30px rgba(80, 90, 110, .16); }
.divider { position: absolute; left: 1301px; top: 0; width: 1px; height: 4px; background: #d8dbe0; }
.avatar { position: absolute; left: 1457px; top: -46px; width: 51px; height: 51px; border-radius: 50%; background: linear-gradient(90deg, #222 36%, #bbb 40%, #777 46%, #222 50%, #222 54%, #eee 57%, #eee 60%, #222 64%); }
.card { flex: none; width: 848px; height: 900px; margin: 96px 0 0 31px; padding: 71px 83px 0 80px; background: #fff; border-radius: 12px; box-shadow: 0 8px 28px rgba(70, 80, 105, .18), 0 0 2px rgba(60, 75, 160, .15); display: flex; flex-direction: column; }
.card h3 { margin: 0 0 50px 1px; font: 400 30px/40px Roboto, sans-serif; color: #4f4f4f; white-space: nowrap; }
.card label { margin: 0 0 6px 1px; height: 30px; line-height: 30px; font-size: 20px; letter-spacing: .45px; color: #555; white-space: nowrap; }
.card .tight { letter-spacing: .32px; }
.card .wide { letter-spacing: .62px; }
.field { height: 65px; width: 685px; margin-bottom: 28px; background: #fafafa; border-radius: 0 5px 5px 0; box-shadow: inset 0 1px 3px rgba(0, 0, 0, .1); }
.field.short { margin-bottom: 27px; }
.select { display: flex; align-items: center; justify-content: flex-end; width: 305px; height: 40px; margin: 24px 0 47px 98px; padding-right: 17px; border: 1px solid #dee2e6; border-radius: 9px; }
.select svg { width: 16px; height: 16px; }
.submit { display: flex; align-items: center; justify-content: center; width: 205px; height: 61px; margin: 18px 0 0 1px; border-radius: 5px; background: #4272d7; color: #fff; font-size: 23px; letter-spacing: .6px; }
.scrollbar { display: flex; flex-direction: column; align-items: center; width: 21px; flex: none; padding: 8px 0 8px; background: #f1f1f1; }
.scrollbar svg { width: 9px; height: 6px; }
.scrollbar i { width: 17px; height: 617px; margin: 51px 0 auto; background: #c1c1c1; }

/* taskbar */
.taskbar { flex: none; display: flex; height: 60px; border-top: 1px solid #4a4c52; background: linear-gradient(90deg, #1c2422 0, #1b2524 380px, #122a2b 570px, #11284a 740px, #13245a 785px, #2b2040 860px, #30204c 1000px, #2c1172 1180px, #32115c 1400px, #2f1446 1560px, #2a1a38 1750px, #2a1c36 1920px); color: #fff; }
.weather { position: relative; width: 331px; padding: 18px 0 0 25px; }
.weather svg { width: 31px; height: 26px; }
.weather span { position: absolute; left: 36px; top: 8px; width: 30px; height: 20px; border-radius: 10px; background: #302e2e; font-size: 13px; line-height: 19px; text-align: center; }
.apps { display: flex; width: 1100px; }
.apps div { position: relative; display: flex; justify-content: center; width: 55px; padding-top: 14px; }
.apps div:first-child { padding-right: 2px; }
.apps svg { width: 30px; height: 30px; }
.apps .on::after { content: ""; position: absolute; left: 23.500px; top: 49px; width: 8px; height: 4px; border-radius: 2px; background: #a49db2; }
.tray { display: flex; align-items: center; margin-left: 137px; gap: 10px; }
.tray svg { width: 20px; height: 20px; }
.tray svg:nth-child(-n+3) { margin-right: 10px; }
.clock { display: flex; flex-direction: column; align-items: flex-end; width: 88px; margin-top: -2px; font-size: 14.500px; line-height: 20px; }
.tray .bell { width: 17px; margin-left: 1px; }
```
